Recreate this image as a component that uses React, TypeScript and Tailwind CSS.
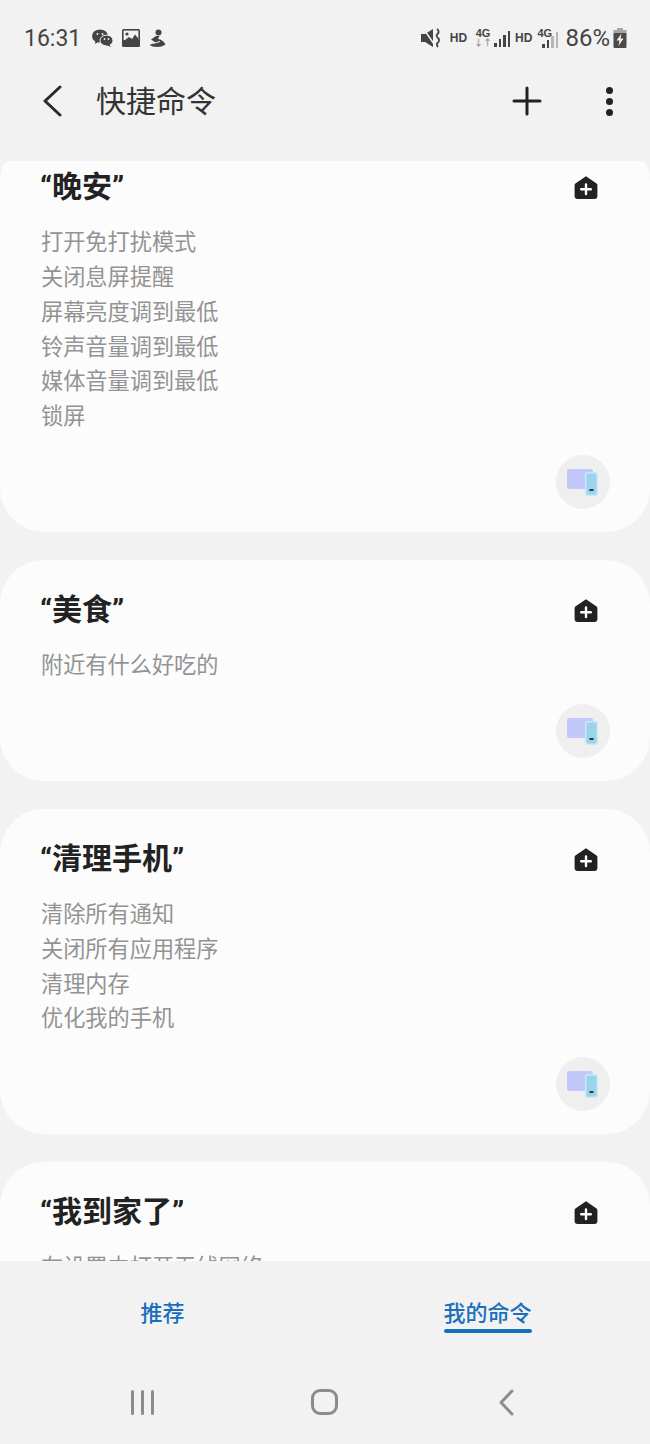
const commands = [
  {
    title: '“晚安”',
    lines: ['打开免打扰模式', '关闭息屏提醒', '屏幕亮度调到最低', '铃声音量调到最低', '媒体音量调到最低', '锁屏'],
  },
  { title: '“美食”', lines: ['附近有什么好吃的'] },
  { title: '“清理手机”', lines: ['清除所有通知', '关闭所有应用程序', '清理内存', '优化我的手机'] },
  { title: '“我到家了”', lines: ['在设置中打开无线网络', '打开蓝牙'] },
];

function AddIcon() {
  return (
    <svg width="24" height="25" viewBox="0 0 24 25" className="mt-[5px] shrink-0">
      <path d="M12 1.2 L22.6 8.4 Q23.4 9 23.4 10 V21 Q23.4 24 20.4 24 H3.6 Q0.6 24 0.6 21 V10 Q0.6 9 1.4 8.4 Z" fill="#222222" />
      <path d="M12 9.5 V19 M7.2 14.2 H16.8" stroke="#ffffff" strokeWidth="2.4" strokeLinecap="round" />
    </svg>
  );
}

function DeviceIcon() {
  return (
    <div className="w-[54px] h-[54px] rounded-full bg-[#efefef] flex items-center justify-center">
      <svg width="32" height="28" viewBox="0 0 32 28">
        <rect x="0" y="1" width="26" height="20" rx="2" fill="#c3c8fa" />
        <rect x="18" y="4" width="13" height="24" rx="2.5" fill="#c4ecf6" />
        <rect x="19.5" y="5.5" width="10" height="21" rx="1.5" fill="#9cd2ec" />
        <rect x="22.5" y="21" width="4" height="2" fill="#333a44" />
      </svg>
    </div>
  );
}

function WeChatIcon() {
  return (
    <svg width="21" height="18" viewBox="0 0 21 18">
      <ellipse cx="8" cy="7" rx="8" ry="6.6" fill="#444" />
      <path d="M3.5 11 L3 15 L7 12.5 Z" fill="#444" />
      <ellipse cx="14.5" cy="11.5" rx="6.5" ry="5.4" fill="#444" stroke="#f2f2f2" strokeWidth="1" />
      <path d="M17.5 15 L18.5 18 L14.5 16 Z" fill="#444" />
      <circle cx="5.5" cy="5" r="1" fill="#f2f2f2" />
      <circle cx="10.5" cy="5" r="1" fill="#f2f2f2" />
      <circle cx="12.5" cy="10" r="0.9" fill="#f2f2f2" />
      <circle cx="16.5" cy="10" r="0.9" fill="#f2f2f2" />
    </svg>
  );
}

function PictureIcon() {
  return (
    <svg width="18" height="18" viewBox="0 0 18 18">
      <rect x="0" y="0" width="18" height="18" rx="1.5" fill="#444" />
      <rect x="1.6" y="1.6" width="14.8" height="9.5" fill="#f2f2f2" />
      <circle cx="5" cy="5" r="1.6" fill="#444" />
      <path d="M1.6 12 L7 8 L10 10 L13 5.5 L16.4 9.5 V13 H1.6 Z" fill="#444" />
    </svg>
  );
}

function AppIcon() {
  return (
    <svg width="17" height="19" viewBox="0 0 17 19">
      <circle cx="9.5" cy="3.4" r="3" fill="#444" />
      <path d="M7 7 L10.5 7 L9 10 Q14 10.5 16.5 15.5 Q13 18 8 18 Q3 18 0.5 16 L6.5 13.5 L2 10.5 Z" fill="#444" />
      <path d="M4.5 14.5 L11 12.5" stroke="#f2f2f2" strokeWidth="1" />
    </svg>
  );
}

function MuteIcon() {
  return (
    <svg width="20" height="20" viewBox="0 0 20 20">
      <path d="M0 6 H4 L12 1 V19 L4 14 H0 Z" fill="#444" />
      <path d="M2 0 L13 16" stroke="#f2f2f2" strokeWidth="1.5" />
      <path d="M16 1 Q19 3.5 16.5 6 Q14.5 8 17 10 Q19.5 12.5 16.5 15 Q15 16.5 17 19" fill="none" stroke="#444" strokeWidth="1.8" />
    </svg>
  );
}

function Signal({ dim = 0 }: { dim?: number }) {
  const heights = [4, 8, 12, 16];
  return (
    <div className="flex items-end gap-[2px] h-[17px]">
      {heights.map((h, i) => (
        <div
          key={i}
          className="w-[2.5px]"
          style={{ height: h, backgroundColor: i >= 4 - dim ? '#b5b5b5' : '#444' }}
        />
      ))}
    </div>
  );
}

function BatteryIcon() {
  return (
    <svg width="14" height="20" viewBox="0 0 14 20">
      <rect x="4" y="0" width="6" height="3" fill="#a5a5a5" />
      <rect x="0.5" y="2" width="13" height="4" fill="#a5a5a5" />
      <rect x="0.5" y="5" width="13" height="15" rx="1" fill="#4a4a4a" />
      <path d="M8.5 5.5 L3.5 12.5 H6.5 L5.5 18 L10.5 10.5 H7.5 Z" fill="#f2f2f2" />
    </svg>
  );
}

export default function App() {
  return (
    <div className="w-[650px] h-[1444px] bg-[#f2f2f2] flex flex-col overflow-hidden font-['Roboto','Noto_Sans_CJK_SC',sans-serif]">
      {/* Status bar */}
      <div className="h-[76px] shrink-0 flex items-center justify-between pl-[24px] pr-[23px]">
        <div className="flex items-center">
          <span className="text-[23px] text-[#444] leading-none">16:31</span>
          <div className="ml-[11px] flex items-center gap-[9px]">
            <WeChatIcon />
            <PictureIcon />
            <AppIcon />
          </div>
        </div>
        <div className="flex items-center text-[#444]">
          <MuteIcon />
          <span className="ml-[9px] text-[12px] font-bold font-['Liberation_Sans',sans-serif]">HD</span>
          <div className="ml-[8px] w-[16px] flex flex-col items-center leading-none">
            <span className="text-[11px] font-bold font-['Liberation_Sans',sans-serif]">4G</span>
            <span className="text-[9px] leading-[9px] text-[#999] font-bold">↓↑</span>
          </div>
          <div className="ml-[3px]"><Signal /></div>
          <span className="ml-[5px] text-[12px] font-bold font-['Liberation_Sans',sans-serif]">HD</span>
          <div className="relative ml-[5px] w-[21px] h-[20px]">
            <span className="absolute left-0 top-0 text-[11px] leading-none font-bold font-['Liberation_Sans',sans-serif]">4G</span>
            <div className="absolute right-0 bottom-0"><Signal dim={2} /></div>
          </div>
          <span className="ml-[7px] text-[24px] leading-none">86%</span>
          <div className="ml-[3px]"><BatteryIcon /></div>
        </div>
      </div>

      {/* Header */}
      <div className="h-[85px] shrink-0 pb-[35px] flex items-center">
        <svg width="20" height="32" viewBox="0 0 20 32" className="ml-[42px]">
          <path d="M18 2 L3 16 L18 30" fill="none" stroke="#2b2b2b" strokeWidth="3" strokeLinecap="round" strokeLinejoin="round" />
        </svg>
        <span className="ml-[34px] mt-[2px] text-[30px] text-[#333] leading-none">快捷命令</span>
        <svg width="30" height="30" viewBox="0 0 30 30" className="ml-auto mr-[64px]">
          <path d="M15 2 V28 M2 15 H28" stroke="#222" strokeWidth="3" strokeLinecap="round" />
        </svg>
        <div className="mr-[37px] flex flex-col gap-[4px]">
          <div className="w-[7px] h-[7px] rounded-full bg-[#222]" />
          <div className="w-[7px] h-[7px] rounded-full bg-[#222]" />
          <div className="w-[7px] h-[7px] rounded-full bg-[#222]" />
        </div>
      </div>

      {/* Command list */}
      <div className="flex-1 min-h-0 overflow-hidden rounded-t-[12px]">
        <div className="-mt-[24px] flex flex-col gap-[28px]">
          {commands.map((c) => (
            <div key={c.title} className="bg-[#fcfcfc] rounded-[44px] pt-[33px] pb-[23px] pl-[41px] pr-[40px]">
              <div className="flex justify-between pr-[12px] h-[34px]">
                <div className="text-[30px] font-bold text-[#222] leading-[34px] -ml-[1px]">{c.title}</div>
                <AddIcon />
              </div>
              <div className="mt-[21px] text-[22.2px] text-[#939393] leading-[34.85px]">
                {c.lines.map((l) => (
                  <div key={l}>{l}</div>
                ))}
              </div>
              <div className="mt-[21px] flex justify-end">
                <DeviceIcon />
              </div>
            </div>
          ))}
        </div>
      </div>

      {/* Tabs */}
      <div className="h-[103px] shrink-0 grid grid-cols-2 text-[22px] font-medium text-[#1a6fbd] leading-none">
        <div className="flex justify-center pt-[42px]">
          <span>推荐</span>
        </div>
        <div className="flex justify-center pt-[42px]">
          <div className="w-[88px] text-center">
            <div className="whitespace-nowrap">我的命令</div>
            <div className="mt-[4px] h-[4px] rounded-full bg-[#1a6fbd]" />
          </div>
        </div>
      </div>

      {/* Nav bar */}
      <div className="h-[80px] shrink-0 grid grid-cols-3 pl-[51px] pr-[53px] pb-[4px]">
        <div className="flex justify-center items-center gap-[7px]">
          <div className="w-[3px] h-[25px] rounded-full bg-[#8c8c8c]" />
          <div className="w-[3px] h-[25px] rounded-full bg-[#8c8c8c]" />
          <div className="w-[3px] h-[25px] rounded-full bg-[#8c8c8c]" />
        </div>
        <div className="flex justify-center items-center">
          <div className="w-[27px] h-[26px] rounded-[9px] border-[3px] border-[#8c8c8c]" />
        </div>
        <div className="flex justify-center items-center">
          <svg width="16" height="27" viewBox="0 0 16 27">
            <path d="M14 2 L3 13.5 L14 25" fill="none" stroke="#8c8c8c" strokeWidth="3" strokeLinecap="round" strokeLinejoin="round" />
          </svg>
        </div>
      </div>
    </div>
  );
}
